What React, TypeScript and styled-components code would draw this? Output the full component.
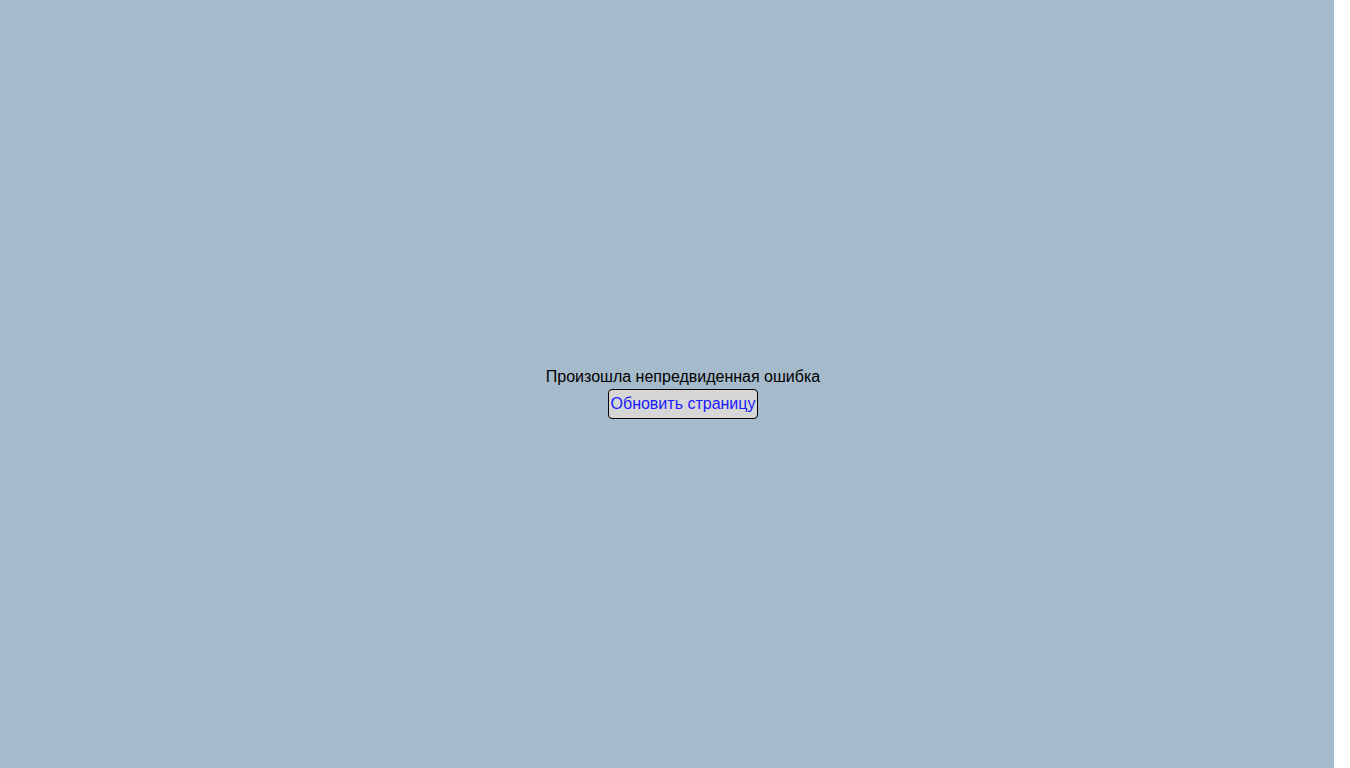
import React from 'react';
import styled, { createGlobalStyle } from 'styled-components';

const GlobalStyle = createGlobalStyle`
  html, body {
    margin: 0;
    padding: 0;
    background: #ffffff;
    font-family: "Liberation Sans", Arial, sans-serif;
  }
`;

const Page = styled.div`
  box-sizing: border-box;
  width: 1334px;
  height: 768px;
  padding: 19px 0 0 32px;
  background-color: #a5bbcb;
  display: flex;
  flex-direction: column;
  align-items: center;
  justify-content: center;
`;

const Message = styled.div`
  font-size: 16px;
  line-height: 18px;
  color: #000000;
`;

const ReloadButton = styled.button`
  margin-top: 3px;
  height: 30px;
  padding: 0 2px;
  font-family: "Liberation Sans", Arial, sans-serif;
  font-size: 16px;
  color: #1a1aff;
  background-color: #d6d6d6;
  border: 1px solid #000000;
  border-radius: 4px;
  cursor: pointer;
`;

const App: React.FC = () => {
  return (
    <>
      <GlobalStyle />
      <Page>
        <Message>Произошла непредвиденная ошибка</Message>
        <ReloadButton type="button" onClick={() => window.location.reload()}>
          Обновить страницу
        </ReloadButton>
      </Page>
    </>
  );
};

export default App;
